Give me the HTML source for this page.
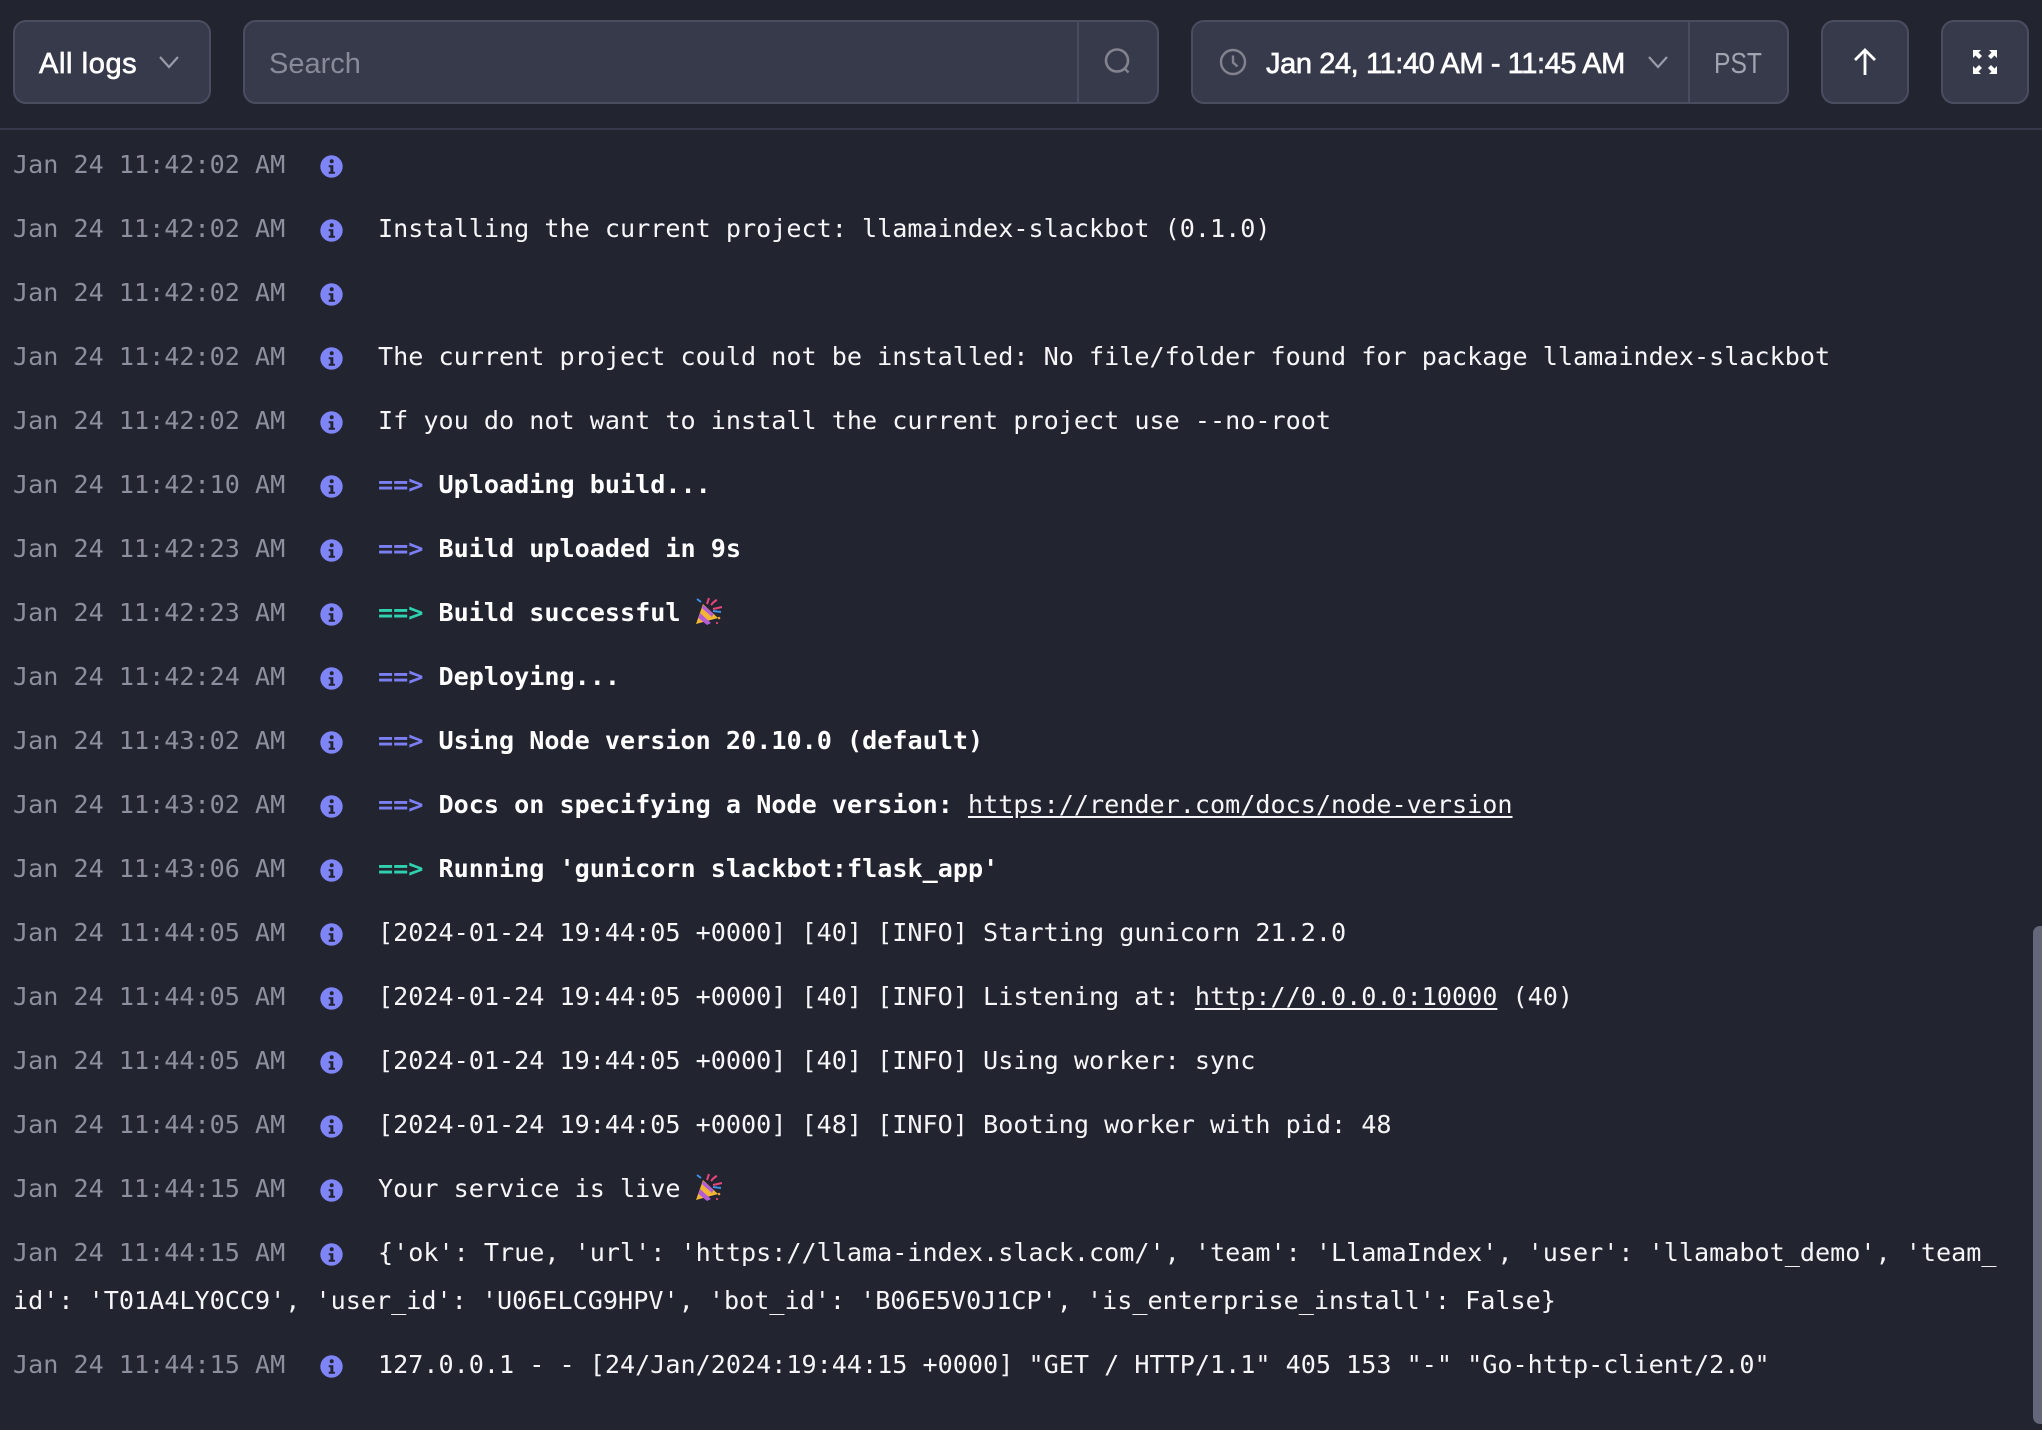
<!DOCTYPE html>
<html><head><meta charset="utf-8"><style>
html,body{margin:0;padding:0;width:2042px;height:1430px;overflow:hidden;background:#222430}
body{position:relative}
.box{position:absolute;box-sizing:border-box;background:#373a4a;border:2px solid #4a4d60;border-radius:13px;top:20px;height:84px}
.d{position:absolute;top:22px;height:80px;width:2px;background:#4a4d60}
.h{position:absolute;font-family:"Liberation Sans",sans-serif;font-size:29px;line-height:40px;top:44px;white-space:pre}
.w{color:#fff;-webkit-text-stroke:.65px #fff}
.l{position:absolute;font-family:"DejaVu Sans Mono",monospace;font-size:25.13px;line-height:40px;white-space:pre;color:#f6f6f8}
.t{color:#8e8f9e;left:13px}
.m{left:378px}
b{font-weight:700;color:#fff}
.p{color:#7b7ff2}.g{color:#2fd1ae}
u{text-underline-offset:3px}
svg{position:absolute}
svg.n{margin:-.5px 0 0 -.5px}
.hr{position:absolute;left:0;top:128px;width:2042px;height:2px;background:#373a4a}
.sb{position:absolute;left:2033px;top:926px;width:9px;height:498px;background:#64667a;border-radius:7px 0 0 7px}
</style></head><body>
<svg width="0" height="0"><defs>
<g id="i"><circle cx="11.5" cy="11.5" r="11.2" fill="#7f84f6"/><circle cx="11.7" cy="6.3" r="2" fill="#222430"/><path d="M8.7 10.2h4.6v6.6h1.6v2H8.7v-2h1.7v-4.6H8.7z" fill="#222430"/></g>
<g id="e"><path d="M2 27L9 7l15 14z" fill="#f2b632"/><path d="M6 16l11 10-4 2L4.500 21zM9.500 8l10 9-1.500 3L7.800 11z" fill="#b45bd6"/><path d="M13 7l2-6M19 12l9-2M17 8c2-2 3-4 6-5" stroke="#e8457c" stroke-width="2" fill="none"/><path d="M3 2l4 3M19 14l8 1" stroke="#3c8ee8" stroke-width="2" fill="none"/><circle cx="25" cy="21" r="1.300" fill="#e8a03c"/><circle cx="23" cy="26" r="1.100" fill="#e8457c"/></g>
</defs></svg>

<div class="box" style="left:13px;width:198px"></div>
<div class="h w" style="left:39px;letter-spacing:.6px">All logs</div>
<svg style="left:158px;top:54px" width="22" height="16" viewBox="0 0 22 16"><path d="M2 3l9 10 9-10" fill="none" stroke="#9a9bab" stroke-width="2.200"/></svg>

<div class="box" style="left:243px;width:916px"></div>
<div class="d" style="left:1077px"></div>
<div class="h" style="left:269px;color:#888a9a">Search</div>
<svg style="left:1103px;top:47px" width="30" height="30" viewBox="0 0 30 30"><circle cx="14" cy="13.500" r="11" fill="none" stroke="#82838f" stroke-width="2.600"/><path d="M21.500 21.500l4 4" stroke="#82838f" stroke-width="2.600"/></svg>

<div class="box" style="left:1191px;width:598px"></div>
<div class="d" style="left:1688px"></div>
<svg style="left:1219px;top:48px" width="28" height="28" viewBox="0 0 28 28"><circle cx="14" cy="14" r="12" fill="none" stroke="#82838f" stroke-width="2.400"/><path d="M14 7.500v7l4.500 4" fill="none" stroke="#82838f" stroke-width="2.400"/></svg>
<div class="h w" style="left:1266px;letter-spacing:-.4px">Jan 24, 11:40 AM - 11:45 AM</div>
<svg style="left:1647px;top:54px" width="22" height="16" viewBox="0 0 22 16"><path d="M2 3l9 10 9-10" fill="none" stroke="#9a9bab" stroke-width="2.200"/></svg>
<div class="h" style="left:1714px;color:#a2a4b2;transform:scaleX(.85);transform-origin:left">PST</div>

<div class="box" style="left:1821px;width:88px"></div>
<svg style="left:1852px;top:47px" width="26" height="30" viewBox="0 0 26 30"><path d="M13 28V3M3 13L13 3l10 10" fill="none" stroke="#fff" stroke-width="2.800"/></svg>
<div class="box" style="left:1941px;width:88px"></div>
<svg style="left:1972px;top:49px" width="26" height="26" viewBox="0 0 26 26" fill="#fff"><path d="M1 1h8L6.500 3.500 10 7l-3 3-3.500-3.500L1 9zM25 1v8l-2.500-2.500L19 10l-3-3 3.500-3.500L17 1zM1 25v-8l2.500 2.500L7 16l3 3-3.500 3.500L9 25zM25 25h-8l2.500-2.500L16 19l3-3 3.500 3.500L25 17z"/></svg>

<div class="hr"></div>

<div class="l t" style="top:145px">Jan 24 11:42:02 AM</div><svg class="n" style="left:320px;top:155px" width="23" height="23"><use href="#i"/></svg>

<div class="l t" style="top:209px">Jan 24 11:42:02 AM</div><svg class="n" style="left:320px;top:219px" width="23" height="23"><use href="#i"/></svg>
<div class="l m" style="top:209px">Installing the current project: llamaindex-slackbot (0.1.0)</div>

<div class="l t" style="top:273px">Jan 24 11:42:02 AM</div><svg class="n" style="left:320px;top:283px" width="23" height="23"><use href="#i"/></svg>

<div class="l t" style="top:337px">Jan 24 11:42:02 AM</div><svg class="n" style="left:320px;top:347px" width="23" height="23"><use href="#i"/></svg>
<div class="l m" style="top:337px">The current project could not be installed: No file/folder found for package llamaindex-slackbot</div>

<div class="l t" style="top:401px">Jan 24 11:42:02 AM</div><svg class="n" style="left:320px;top:411px" width="23" height="23"><use href="#i"/></svg>
<div class="l m" style="top:401px">If you do not want to install the current project use --no-root</div>

<div class="l t" style="top:465px">Jan 24 11:42:10 AM</div><svg class="n" style="left:320px;top:475px" width="23" height="23"><use href="#i"/></svg>
<div class="l m" style="top:465px"><b class="p">==&gt;</b> <b>Uploading build...</b></div>

<div class="l t" style="top:529px">Jan 24 11:42:23 AM</div><svg class="n" style="left:320px;top:539px" width="23" height="23"><use href="#i"/></svg>
<div class="l m" style="top:529px"><b class="p">==&gt;</b> <b>Build uploaded in 9s</b></div>

<div class="l t" style="top:593px">Jan 24 11:42:23 AM</div><svg class="n" style="left:320px;top:603px" width="23" height="23"><use href="#i"/></svg>
<div class="l m" style="top:593px"><b class="g">==&gt;</b> <b>Build successful</b></div>
<svg style="left:694px;top:597px" width="30" height="30"><use href="#e"/></svg>

<div class="l t" style="top:657px">Jan 24 11:42:24 AM</div><svg class="n" style="left:320px;top:667px" width="23" height="23"><use href="#i"/></svg>
<div class="l m" style="top:657px"><b class="p">==&gt;</b> <b>Deploying...</b></div>

<div class="l t" style="top:721px">Jan 24 11:43:02 AM</div><svg class="n" style="left:320px;top:731px" width="23" height="23"><use href="#i"/></svg>
<div class="l m" style="top:721px"><b class="p">==&gt;</b> <b>Using Node version 20.10.0 (default)</b></div>

<div class="l t" style="top:785px">Jan 24 11:43:02 AM</div><svg class="n" style="left:320px;top:795px" width="23" height="23"><use href="#i"/></svg>
<div class="l m" style="top:785px"><b class="p">==&gt;</b> <b>Docs on specifying a Node version: </b><u>https://render.com/docs/node-version</u></div>

<div class="l t" style="top:849px">Jan 24 11:43:06 AM</div><svg class="n" style="left:320px;top:859px" width="23" height="23"><use href="#i"/></svg>
<div class="l m" style="top:849px"><b class="g">==&gt;</b> <b>Running 'gunicorn slackbot:flask_app'</b></div>

<div class="l t" style="top:913px">Jan 24 11:44:05 AM</div><svg class="n" style="left:320px;top:923px" width="23" height="23"><use href="#i"/></svg>
<div class="l m" style="top:913px">[2024-01-24 19:44:05 +0000] [40] [INFO] Starting gunicorn 21.2.0</div>

<div class="l t" style="top:977px">Jan 24 11:44:05 AM</div><svg class="n" style="left:320px;top:987px" width="23" height="23"><use href="#i"/></svg>
<div class="l m" style="top:977px">[2024-01-24 19:44:05 +0000] [40] [INFO] Listening at: <u>http://0.0.0.0:10000</u> (40)</div>

<div class="l t" style="top:1041px">Jan 24 11:44:05 AM</div><svg class="n" style="left:320px;top:1051px" width="23" height="23"><use href="#i"/></svg>
<div class="l m" style="top:1041px">[2024-01-24 19:44:05 +0000] [40] [INFO] Using worker: sync</div>

<div class="l t" style="top:1105px">Jan 24 11:44:05 AM</div><svg class="n" style="left:320px;top:1115px" width="23" height="23"><use href="#i"/></svg>
<div class="l m" style="top:1105px">[2024-01-24 19:44:05 +0000] [48] [INFO] Booting worker with pid: 48</div>

<div class="l t" style="top:1169px">Jan 24 11:44:15 AM</div><svg class="n" style="left:320px;top:1179px" width="23" height="23"><use href="#i"/></svg>
<div class="l m" style="top:1169px">Your service is live</div>
<svg style="left:694px;top:1173px" width="30" height="30"><use href="#e"/></svg>

<div class="l t" style="top:1233px">Jan 24 11:44:15 AM</div><svg class="n" style="left:320px;top:1243px" width="23" height="23"><use href="#i"/></svg>
<div class="l m" style="top:1233px">{'ok': True, 'url': 'https://llama-index.slack.com/', 'team': 'LlamaIndex', 'user': 'llamabot_demo', 'team_</div>
<div class="l" style="left:13px;top:1281px">id': 'T01A4LY0CC9', 'user_id': 'U06ELCG9HPV', 'bot_id': 'B06E5V0J1CP', 'is_enterprise_install': False}</div>

<div class="l t" style="top:1345px">Jan 24 11:44:15 AM</div><svg class="n" style="left:320px;top:1355px" width="23" height="23"><use href="#i"/></svg>
<div class="l m" style="top:1345px">127.0.0.1 - - [24/Jan/2024:19:44:15 +0000] "GET / HTTP/1.1" 405 153 "-" "Go-http-client/2.0"</div>

<div class="sb"></div>
</body></html>
